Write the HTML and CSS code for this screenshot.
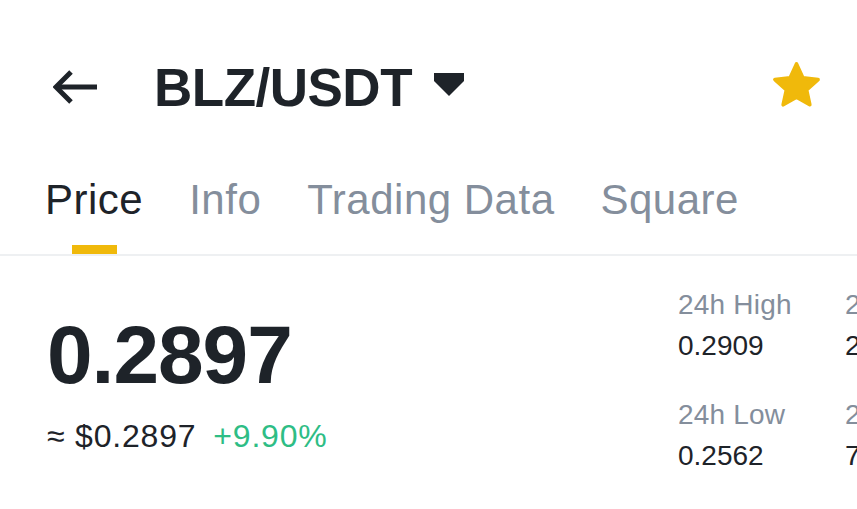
FILE: index.html
```html
<!DOCTYPE html>
<html>
<head>
<meta charset="utf-8">
<link rel="stylesheet" href="styles.css">
</head>
<body>
<div class="page">
  <header class="header">
    <svg class="back" width="44" height="36" viewBox="0 0 44 36">
      <path d="M18 3 L3 18 L18 33" fill="none" stroke="#1E2329" stroke-width="5" stroke-linejoin="miter"/>
      <path d="M4 18 H44" fill="none" stroke="#1E2329" stroke-width="5"/>
    </svg>
    <div class="title">BLZ/USDT</div>
    <svg class="caret" width="30" height="23" viewBox="0 0 30 23">
      <polygon points="0,0 30,0 30,8 15,23 0,8" fill="#1E2329"/>
    </svg>
    <div class="spacer"></div>
    <svg class="star" width="55" height="55" viewBox="0 0 24 24">
      <path d="M12 2.6 L14.8 8.7 L21.4 9.4 L16.4 13.9 L17.8 20.4 L12 17.1 L6.2 20.4 L7.6 13.9 L2.6 9.4 L9.2 8.7 Z" fill="#F0B90B" stroke="#F0B90B" stroke-width="1.6" stroke-linejoin="round"/>
    </svg>
  </header>
  <nav class="tabs">
    <div class="tab active">Price<span class="bar"></span></div>
    <div class="tab">Info</div>
    <div class="tab">Trading Data</div>
    <div class="tab">Square</div>
  </nav>
  <section class="quote">
    <div class="main">
      <div class="last">0.2897</div>
      <div class="sub"><span class="fiat">≈ $0.2897</span><span class="chg">+9.90%</span></div>
    </div>
    <div class="stats">
      <div class="stat"><div class="label">24h High</div><div class="value">0.2909</div></div>
      <div class="stat"><div class="label">24h Vol(BLZ)</div><div class="value">247.07M</div></div>
      <div class="stat"><div class="label">24h Low</div><div class="value">0.2562</div></div>
      <div class="stat"><div class="label">24h Vol(USDT)</div><div class="value">70.12M</div></div>
    </div>
  </section>
</div>
</body>
</html>
```

FILE: styles.css
```css
html, body {
  margin: 0;
  padding: 0;
  background: #ffffff;
}
body {
  width: 857px;
  height: 509px;
  overflow: hidden;
  font-family: "Liberation Sans", Arial, sans-serif;
  color: #1E2329;
}
.page {
  width: 857px;
}
.header {
  height: 174px;
  display: flex;
  align-items: center;
  padding: 0 33px 0 53px;
  box-sizing: border-box;
}
.back {
  display: block;
  flex: none;
}
.title {
  margin-left: 57px;
  font-size: 53px;
  line-height: 53px;
  font-weight: bold;
  letter-spacing: -0.5px;
  color: #1E2329;
}
.caret {
  display: block;
  margin-left: 22px;
  margin-top: -6px;
}
.spacer {
  flex: 1;
}
.star {
  display: block;
  margin-top: -4px;
}
.tabs {
  display: flex;
  gap: 46px;
  padding: 5px 0 0 45px;
  height: 82px;
  box-sizing: border-box;
  border-bottom: 2px solid #EEF0F2;
}
.tab {
  position: relative;
  font-size: 42px;
  line-height: 42px;
  letter-spacing: 0.5px;
  color: #848E9C;
}
.tab.active {
  color: #1E2329;
}
.bar {
  position: absolute;
  left: 50%;
  top: 66px;
  width: 45px;
  height: 9px;
  margin-left: -22px;
  background: #F0B90B;
}
.quote {
  display: grid;
  grid-template-columns: 631px 1fr;
  padding-left: 47px;
}
.main {
  padding-top: 58px;
}
.last {
  font-size: 82px;
  line-height: 82px;
  font-weight: bold;
  letter-spacing: -1px;
  color: #1E2329;
}
.sub {
  margin-top: 24px;
  display: flex;
  gap: 17px;
  font-size: 32px;
  line-height: 32px;
  letter-spacing: 0.8px;
}
.fiat {
  color: #1E2329;
}
.chg {
  color: #2EBD85;
}
.stats {
  padding-top: 35px;
  display: grid;
  grid-template-columns: 167px 167px;
  row-gap: 41px;
  white-space: nowrap;
}
.label {
  font-size: 28px;
  line-height: 28px;
  letter-spacing: 0.2px;
  color: #848E9C;
}
.value {
  margin-top: 13px;
  font-size: 28px;
  line-height: 28px;
  color: #1E2329;
}
```
